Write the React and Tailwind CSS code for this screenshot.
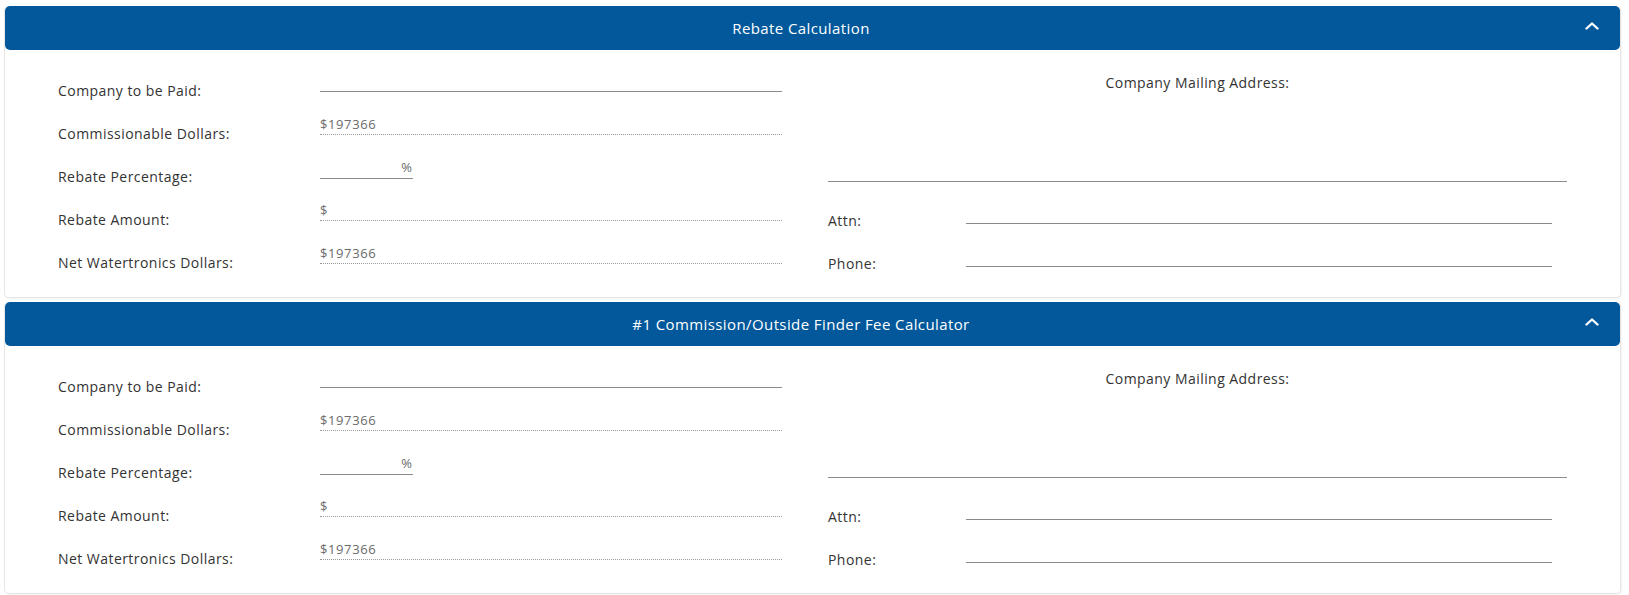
import React from "react";

const font = { fontFamily: '"Open Sans", "Noto Sans", Arial, sans-serif' };

const Chevron = () => (
  <svg width="14" height="8" viewBox="0 0 14 8" className="block">
    <polyline
      points="1.5,6.5 7,1.5 12.5,6.5"
      fill="none"
      stroke="white"
      strokeWidth="2.3"
      strokeLinecap="round"
      strokeLinejoin="round"
    />
  </svg>
);

const FieldRow = ({ label, children }) => (
  <div className="flex h-[43px] items-start">
    <div className="w-[262px] pt-[12px] text-[14px] leading-[19px] tracking-[0.45px] text-[#333]">
      {label}
    </div>
    {children}
  </div>
);

const LeftFields = () => (
  <div className="w-[724px] shrink-0">
    <FieldRow label="Company to be Paid:">
      <div className="mt-[4px] h-[19px] flex-1 border-b border-[#8a8a8a]" />
    </FieldRow>
    <FieldRow label="Commissionable Dollars:">
      <div className="mt-[4px] h-[19px] flex-1 border-b border-dotted border-[#9a9a9a] text-[13px] leading-[17px] tracking-[0.6px] text-[#6b6b6b]">
        $197366
      </div>
    </FieldRow>
    <FieldRow label="Rebate Percentage:">
      <div className="mt-[4px] flex h-[20px] w-[93px] justify-end border-b border-[#8a8a8a] pr-[1px] text-[13px] leading-[17px] text-[#6b6b6b]">
        %
      </div>
    </FieldRow>
    <FieldRow label="Rebate Amount:">
      <div className="mt-[4px] h-[19px] flex-1 border-b border-dotted border-[#9a9a9a] text-[13px] leading-[17px] text-[#6b6b6b]">
        $
      </div>
    </FieldRow>
    <FieldRow label="Net Watertronics Dollars:">
      <div className="mt-[4px] h-[19px] flex-1 border-b border-dotted border-[#9a9a9a] text-[13px] leading-[17px] tracking-[0.6px] text-[#6b6b6b]">
        $197366
      </div>
    </FieldRow>
  </div>
);

const RightFields = () => (
  <div className="flex-1">
    <div className="h-[113px] border-b border-[#8a8a8a] pt-[4px] text-center text-[14px] leading-[19px] tracking-[0.45px] text-[#333]">
      Company Mailing Address:
    </div>
    <div className="pt-[16px]">
      {["Attn:", "Phone:"].map((l) => (
        <div key={l} className="flex h-[43px] items-start pr-[15px]">
          <div className="w-[138px] pt-[13px] text-[14px] leading-[19px] tracking-[0.45px] text-[#333]">
            {l}
          </div>
          <div className="mt-[25px] flex-1 border-b border-[#8a8a8a]" />
        </div>
      ))}
    </div>
  </div>
);

const Section = ({ title }) => (
  <div className="mb-[4px] rounded-[5px] border-x border-b border-[#e6e6e6] bg-white shadow-[1px_1px_2px_rgba(0,0,0,0.05)]">
    <div className="flex h-[44px] items-center rounded-[5px] bg-[#02589b] text-white">
      <div className="flex-1 pl-[25px] text-center text-[15px] font-medium tracking-[0.4px]">
        {title}
      </div>
      <div className="flex w-[48px] justify-center pb-[5px] pr-[8px]">
        <Chevron />
      </div>
    </div>
    <div className="flex h-[247px] gap-[46px] px-[53px] pt-[19px]">
      <LeftFields />
      <RightFields />
    </div>
  </div>
);

export default function App() {
  return (
    <div className="min-h-[595px] bg-white pl-[4px] pr-[8px] pt-[6px]" style={font}>
      <Section title="Rebate Calculation" />
      <Section title="#1 Commission/Outside Finder Fee Calculator" />
    </div>
  );
}
